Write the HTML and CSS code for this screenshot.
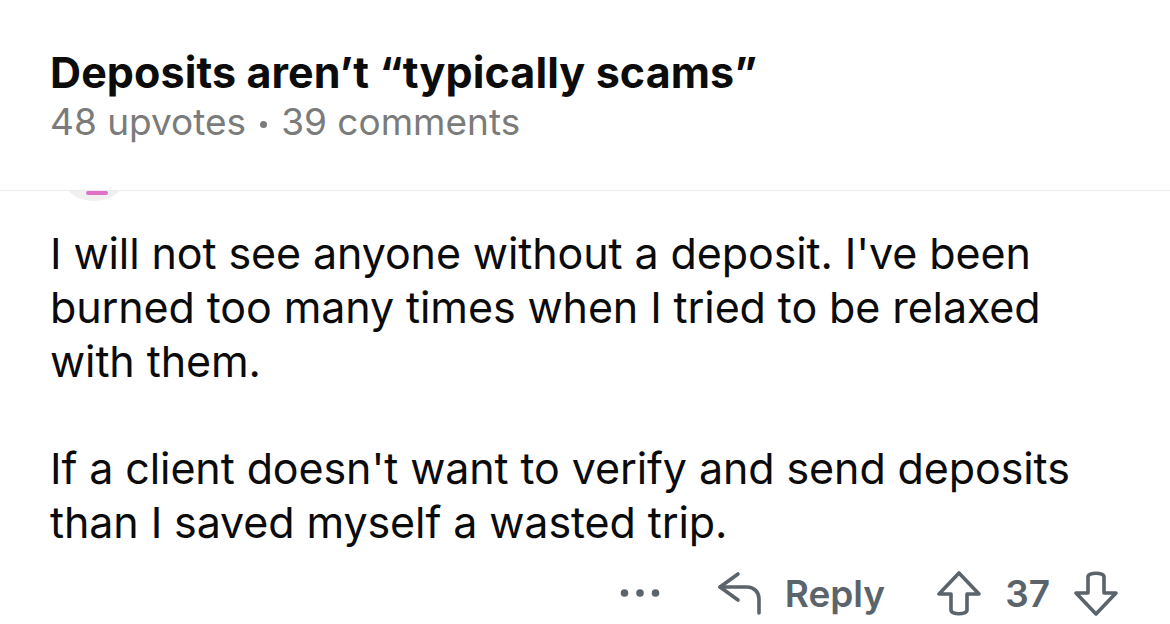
FILE: index.html
```html
<!DOCTYPE html>
<html>
<head>
<meta charset="utf-8">
<link rel="stylesheet" href="styles.css">
</head>
<body>
<div class="page">
  <header class="header">
    <h1 class="title">Deposits aren’t “typically scams”</h1>
    <div class="meta"><span>48 upvotes</span><span class="dot"></span><span>39 comments</span></div>
  </header>
  <div class="comment">
    <div class="avatar"><div class="avatar-pink"></div></div>
    <div class="body">
      <p>I will not see anyone without a deposit. I've been burned too many times when I tried to be relaxed with them.</p>
      <p>If a client doesn't want to verify and send deposits than I saved myself a wasted trip.</p>
    </div>
    <div class="actions">
      <svg class="more" width="40" height="10" viewBox="0 0 40 10" fill="#5b636b">
        <circle cx="4.5" cy="5" r="3.8"/>
        <circle cx="20" cy="5" r="3.8"/>
        <circle cx="35.5" cy="5" r="3.8"/>
      </svg>
      <span class="reply">
        <svg class="reply-icon" width="46" height="44" viewBox="0 0 46 44" fill="none" stroke="#5b636b" stroke-width="3.6" stroke-linecap="round" stroke-linejoin="round">
          <path d="M21 3 L3 16 L21 29"/>
          <path d="M3 16 H30 C37 16 42 21 42 28 V42"/>
        </svg>
        <span class="label">Reply</span>
      </span>
      <span class="votes">
        <svg width="44" height="45" viewBox="0 0 44 45" fill="none" stroke="#5b636b" stroke-width="3.6" stroke-linejoin="round">
          <path d="M22 2 L2 23 H14 V39 C14 44 30 44 30 39 V23 H42 Z"/>
        </svg>
        <span class="count">37</span>
        <svg width="44" height="45" viewBox="0 0 44 45" fill="none" stroke="#5b636b" stroke-width="3.6" stroke-linejoin="round">
          <path d="M22 43 L2 22 H14 V6 C14 1 30 1 30 6 V22 H42 Z"/>
        </svg>
      </span>
    </div>
  </div>
</div>
</body>
</html>
```

FILE: styles.css
```css
* { box-sizing: border-box; }
html, body {
  margin: 0;
  padding: 0;
  background: #ffffff;
}
body {
  width: 1170px;
  height: 624px;
  overflow: hidden;
  font-family: Inter, "Noto Sans", "Liberation Sans", sans-serif;
  color: #0b0b0b;
}
.page {
  position: relative;
  width: 1170px;
  height: 624px;
}
.header {
  position: relative;
  z-index: 2;
  background: #ffffff;
  height: 191px;
  padding: 47px 30px 0 50px;
  border-bottom: 1px solid #ececec;
}
.title {
  margin: 0;
  font-size: 43px;
  font-weight: 700;
  line-height: 50px;
  letter-spacing: 0.1px;
  color: #0c0c0c;
}
.meta {
  display: flex;
  align-items: center;
  gap: 14px;
  font-size: 37px;
  line-height: 44px;
  color: #7b7b7b;
  margin-top: 3px;
}
.meta .dot {
  width: 7px;
  height: 7px;
  border-radius: 50%;
  background: #7b7b7b;
  margin-top: 4px;
}
.comment {
  position: relative;
  margin-top: -40px;
  padding: 0 30px 0 50px;
}
.avatar {
  width: 64px;
  height: 50px;
  margin-left: 12px;
  border-radius: 50%;
  background: #f0f0f0;
  position: relative;
  overflow: hidden;
}
.avatar-pink {
  position: absolute;
  left: 24px;
  top: 40px;
  width: 22px;
  height: 4px;
  border-radius: 2px;
  background: #e070c8;
}
.body {
  margin-top: 25px;
  max-width: 1040px;
  font-size: 43px;
  line-height: 54px;
  letter-spacing: -0.1px;
  color: #0b0b0b;
}
.body p {
  margin: 0 0 53px 0;
}
.body p:last-child {
  margin-bottom: 0;
}
.actions {
  display: flex;
  justify-content: flex-end;
  align-items: center;
  margin-top: 21px;
  padding-right: 22px;
  color: #5b636b;
  height: 46px;
}
.more {
  margin-right: 57px;
}
.reply {
  display: flex;
  align-items: center;
  gap: 22px;
  margin-right: 52px;
}
.label, .count {
  font-size: 37px;
  font-weight: 600;
}
.votes {
  display: flex;
  align-items: center;
  gap: 24px;
}
```
